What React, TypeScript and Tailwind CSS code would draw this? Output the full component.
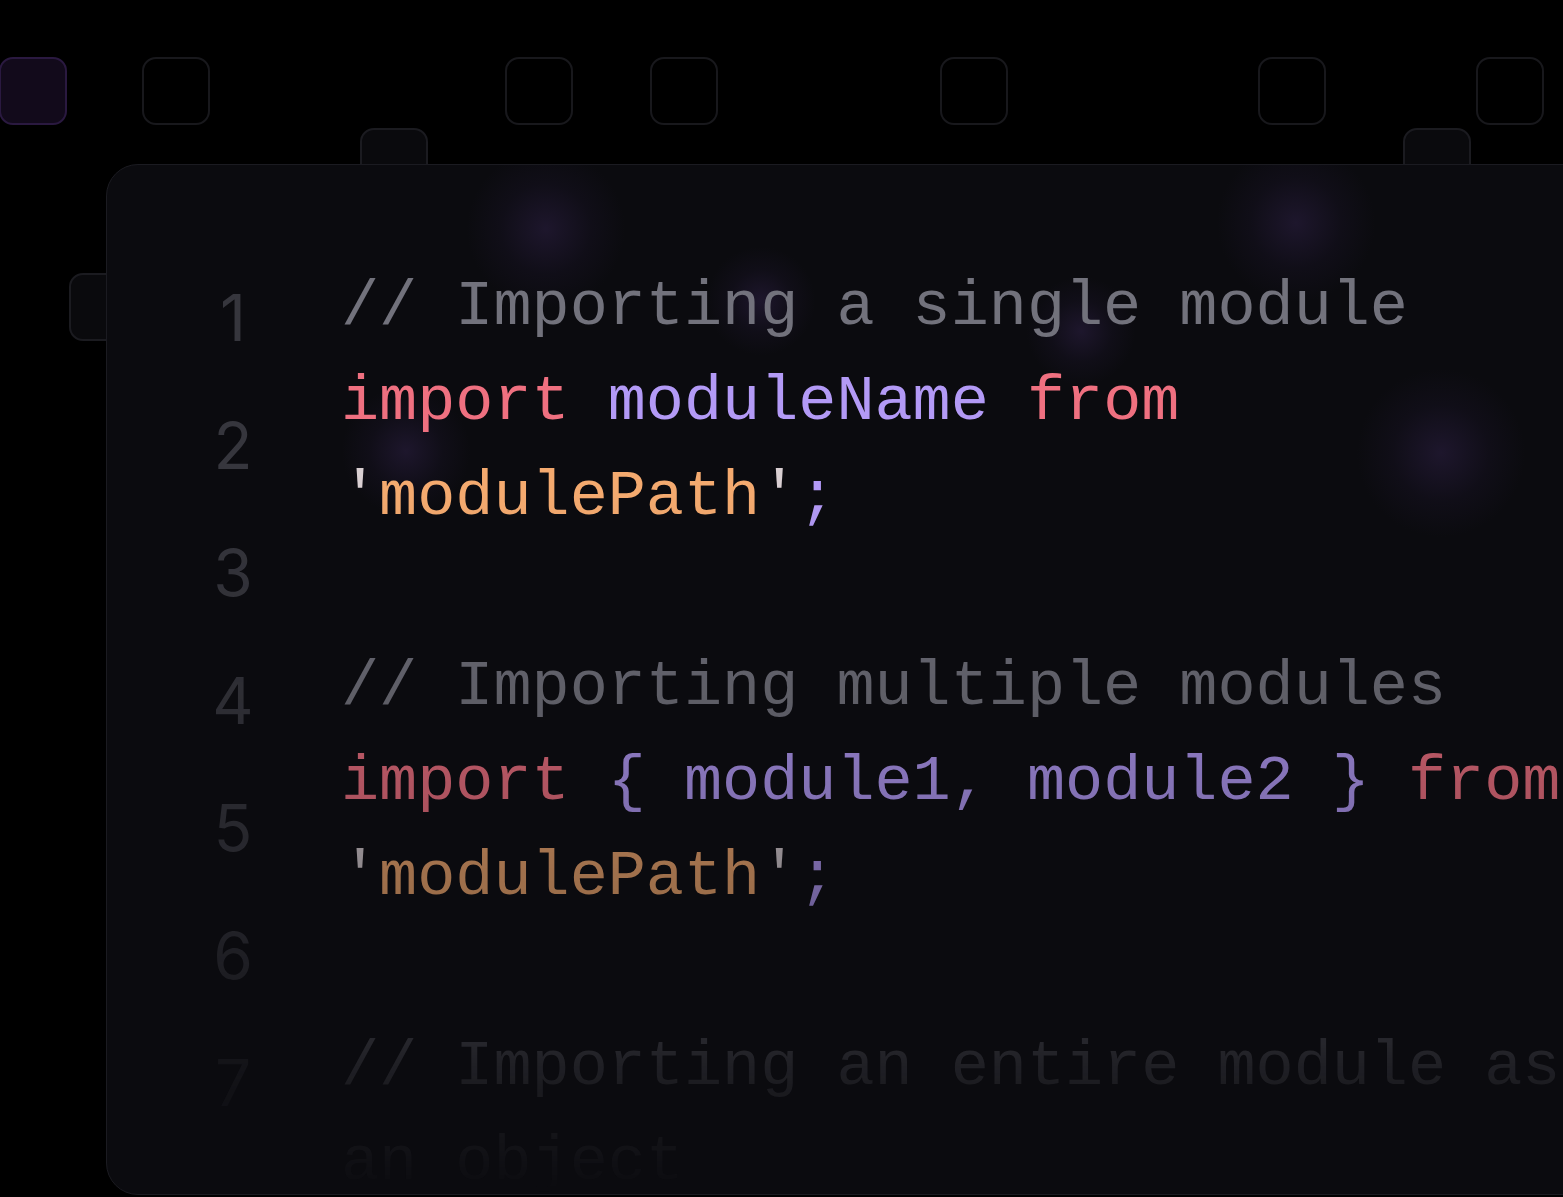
import React from "react";

const K = ({ children }: { children: React.ReactNode }) => (
  <span className="text-[#ef7080]">{children}</span>
);
const V = ({ children }: { children: React.ReactNode }) => (
  <span className="text-[#b39af6]">{children}</span>
);
const S = ({ children }: { children: React.ReactNode }) => (
  <span className="text-[#f4aa6f]">{children}</span>
);
const Q = ({ children }: { children: React.ReactNode }) => (
  <span className="text-[#d9cfd2]">{children}</span>
);
const C = ({ children }: { children: React.ReactNode }) => (
  <span className="text-[#72727c]">{children}</span>
);

function Square({ x, y, tone }: { x: number; y: number; tone: "plain" | "purple" | "raised" }) {
  const cls =
    tone === "purple"
      ? "bg-[#120a1b] border-[#2a1940]"
      : tone === "raised"
      ? "bg-[#0a0a0d] border-[#1b1b20]"
      : "bg-black border-[#18181c]";
  return (
    <div
      className={`absolute w-[68px] h-[68px] rounded-[14px] border-2 ${cls}`}
      style={{ left: x, top: y }}
    />
  );
}

export default function App() {
  const squares: { x: number; y: number; tone: "plain" | "purple" | "raised" }[] = [
    { x: -1, y: 57, tone: "purple" },
    { x: 142, y: 57, tone: "plain" },
    { x: 505, y: 57, tone: "plain" },
    { x: 650, y: 57, tone: "plain" },
    { x: 940, y: 57, tone: "plain" },
    { x: 1258, y: 57, tone: "plain" },
    { x: 1476, y: 57, tone: "plain" },
    { x: 360, y: 128, tone: "raised" },
    { x: 1403, y: 128, tone: "raised" },
    { x: 69, y: 273, tone: "raised" },
  ];
  const glows = [
    { x: 545, y: 228, s: 160 },
    { x: 1295, y: 222, s: 160 },
    { x: 1440, y: 452, s: 170 },
    { x: 405, y: 450, s: 130 },
    { x: 760, y: 300, s: 110 },
    { x: 1080, y: 330, s: 110 },
  ];
  return (
    <div className="relative w-full h-[1197px] bg-black overflow-hidden">
      {squares.map((s, i) => (
        <Square key={i} {...s} />
      ))}
      <div className="relative ml-[106px] mt-[164px] w-[1600px] h-[1031px] rounded-[32px] border border-[#1b1b21] bg-[#0b0b0f] overflow-hidden">
        {glows.map((g, i) => (
          <div
            key={i}
            className="absolute rounded-full bg-[radial-gradient(circle,rgba(52,36,80,0.45)_0%,rgba(40,28,64,0.18)_40%,transparent_70%)]"
            style={{ left: g.x - 106 - g.s / 2, top: g.y - 164 - g.s / 2, width: g.s, height: g.s }}
          />
        ))}
        <div className="relative flex items-start pl-[76px] [mask-image:linear-gradient(to_bottom,black_330px,rgba(0,0,0,0.8)_540px,rgba(0,0,0,0.62)_730px,rgba(0,0,0,0.16)_920px,transparent_1030px)]">
          <div className="w-[100px] pt-[89px] flex flex-col text-center font-['Inter',sans-serif] text-[64px] leading-[127.5px] text-[#36363d]">
            {[1, 2, 3, 4, 5, 6, 7].map((n) => (
              <div key={n}>{n}</div>
            ))}
          </div>
          <div className="ml-[58px] pt-[95px] w-[1250px] font-['Liberation_Mono',monospace] text-[63.5px] leading-[95px] whitespace-pre-wrap">
            <div>
              <C>// Importing a single module</C>
            </div>
            <div>
              <K>import</K> <V>moduleName</V> <K>from</K> <Q>'</Q>
              <S>modulePath</S>
              <Q>'</Q>
              <V>;</V>
            </div>
            <div>{"\u00a0"}</div>
            <div>
              <C>// Importing multiple modules</C>
            </div>
            <div>
              <K>import</K> <V>{"{"}</V> <V>module1,</V> <V>module2</V> <V>{"}"}</V> <K>from</K> <Q>'</Q>
              <S>modulePath</S>
              <Q>'</Q>
              <V>;</V>
            </div>
            <div>{"\u00a0"}</div>
            <div>
              <C>// Importing an entire module as an object</C>
            </div>
            <div>
              <K>import</K> <V>*</V> <K>as</K> <V>moduleObject</V> <K>from</K> <Q>'</Q>
              <S>modulePath</S>
              <Q>'</Q>
              <V>;</V>
            </div>
          </div>
        </div>
      </div>
    </div>
  );
}
